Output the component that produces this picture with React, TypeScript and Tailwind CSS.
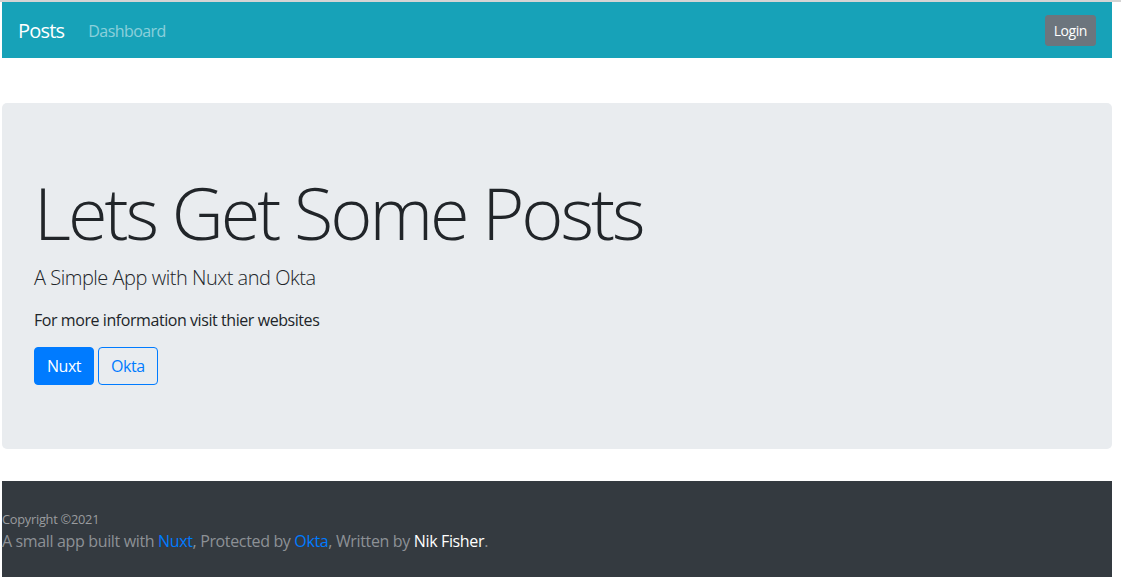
export default function App() {
  const font = { fontFamily: '"Segoe UI", "Open Sans", "Noto Sans", sans-serif' };
  return (
    <div className="min-h-[585px] bg-white border-t-2 border-[#d4d4d4]" style={font}>
      <div className="w-[1110px] ml-[2px]">
        <nav className="h-[56px] bg-[#17a2b8] flex items-center px-4">
          <span className="text-white text-[20px] leading-[30px] mr-4 pt-[2px] tracking-[-0.04em]">Posts</span>
          <span className="text-[rgba(255,255,255,0.5)] text-[16px] leading-6 px-2 pt-[2px] tracking-[-0.035em]">Dashboard</span>
          <div className="flex-1" />
          <button className="bg-[#6c757d] text-white text-[14px] leading-[21px] px-2 py-1 border border-[#6c757d] rounded-[3px] tracking-[-0.03em]">
            Login
          </button>
        </nav>
        <div className="mt-[45px] bg-[#e9ecef] rounded-[5px] px-8 py-16">
          <h1 className="text-[72px] leading-[1.2] font-light text-[#212529] mb-2 tracking-[-0.042em] pt-[2px]">Lets Get Some Posts</h1>
          <p className="text-[20px] leading-[30px] font-light text-[#212529] mb-[15px] tracking-[-0.024em]">A Simple App with Nuxt and Okta</p>
          <p className="text-[16px] leading-6 text-[#212529] mb-[15px] tracking-[-0.027em]">For more information visit thier websites</p>
          <div className="flex gap-[4px]">
            <button className="bg-[#007bff] border border-[#007bff] text-white text-[16px] leading-6 px-3 py-[6px] rounded-[4px] tracking-[-0.03em]">Nuxt</button>
            <button className="bg-transparent border border-[#007bff] text-[#007bff] text-[16px] leading-6 px-3 py-[6px] rounded-[4px] tracking-[-0.03em]">Okta</button>
          </div>
        </div>
        <footer className="mt-8 h-[96px] bg-[#343a40] pt-[29px]">
          <div className="text-[12.8px] leading-[19px] text-[#9a9c9f] tracking-[-0.02em]">Copyright ©2021</div>
          <div className="text-[16px] leading-6 text-[#8d9196] tracking-[-0.022em]">
            A small app built with <span className="text-[#007bff]">Nuxt</span>, Protected by{" "}
            <span className="text-[#007bff]">Okta</span>, Written by <span className="text-white">Nik Fisher</span>.
          </div>
        </footer>
      </div>
    </div>
  );
}
